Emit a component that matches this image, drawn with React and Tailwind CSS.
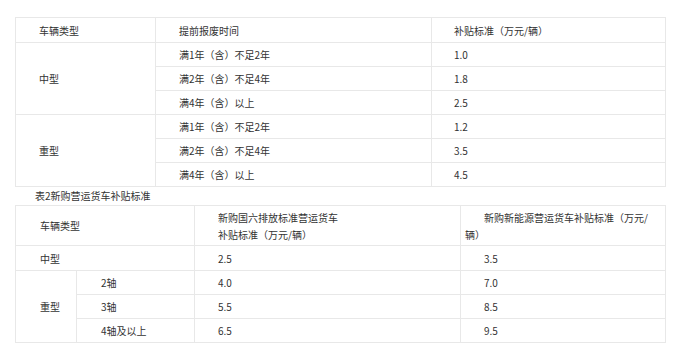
export default function App() {
  const td = "border border-[#e8e8e8] align-middle";
  const t1 = [
    ["满1年（含）不足2年", "1.0"],
    ["满2年（含）不足4年", "1.8"],
    ["满4年（含）以上", "2.5"],
    ["满1年（含）不足2年", "1.2"],
    ["满2年（含）不足4年", "3.5"],
    ["满4年（含）以上", "4.5"],
  ];
  const heavy = [
    ["2轴", "4.0", "7.0"],
    ["3轴", "5.5", "8.5"],
    ["4轴及以上", "6.5", "9.5"],
  ];

  return (
    <div
      className="w-[684px] h-[360px] bg-white text-[#333] text-[10px] leading-[17px] pt-[17px] px-[15px]"
      style={{ fontFamily: '"Noto Sans CJK SC", "Noto Sans", sans-serif' }}
    >
      <table className="w-[650px] border-collapse table-fixed">
        <colgroup>
          <col className="w-[140px]" />
          <col className="w-[276px]" />
          <col className="w-[234px]" />
        </colgroup>
        <tbody>
          <tr className="h-[25px]">
            <td className={`${td} pl-[23px]`}>车辆类型</td>
            <td className={`${td} pl-[23px]`}>提前报废时间</td>
            <td className={`${td} pl-[22px]`}>补贴标准（万元/辆）</td>
          </tr>
          {t1.map(([a, b], i) => (
            <tr key={i} className="h-[24px]">
              {i % 3 === 0 && (
                <td rowSpan={3} className={`${td} pl-[23px]`}>
                  {i === 0 ? "中型" : "重型"}
                </td>
              )}
              <td className={`${td} pl-[23px]`}>{a}</td>
              <td className={`${td} pl-[22px]`}>{b}</td>
            </tr>
          ))}
        </tbody>
      </table>

      <div className="h-[18px] leading-[18px] pl-[20px]">表2新购营运货车补贴标准</div>

      <table className="w-[650px] border-collapse table-fixed">
        <colgroup>
          <col className="w-[61px]" />
          <col className="w-[118px]" />
          <col className="w-[266px]" />
          <col className="w-[205px]" />
        </colgroup>
        <tbody>
          <tr className="h-[40px]">
            <td colSpan={2} className={`${td} pl-[24px]`}>车辆类型</td>
            <td className={`${td} pl-[23px]`}>
              新购国六排放标准营运货车
              <br />
              补贴标准（万元/辆）
            </td>
            <td className={`${td} pl-[4px] pr-[12px] indent-[19px]`}>
              新购新能源营运货车补贴标准（万元/辆）
            </td>
          </tr>
          <tr className="h-[25px]">
            <td colSpan={2} className={`${td} pl-[24px]`}>中型</td>
            <td className={`${td} pl-[23px]`}>2.5</td>
            <td className={`${td} pl-[23px]`}>3.5</td>
          </tr>
          {heavy.map(([a, b, c], i) => (
            <tr key={i} className="h-[24px]">
              {i === 0 && (
                <td rowSpan={3} className={`${td} pl-[24px]`}>重型</td>
              )}
              <td className={`${td} pl-[24px]`}>{a}</td>
              <td className={`${td} pl-[23px]`}>{b}</td>
              <td className={`${td} pl-[23px]`}>{c}</td>
            </tr>
          ))}
        </tbody>
      </table>
    </div>
  );
}
